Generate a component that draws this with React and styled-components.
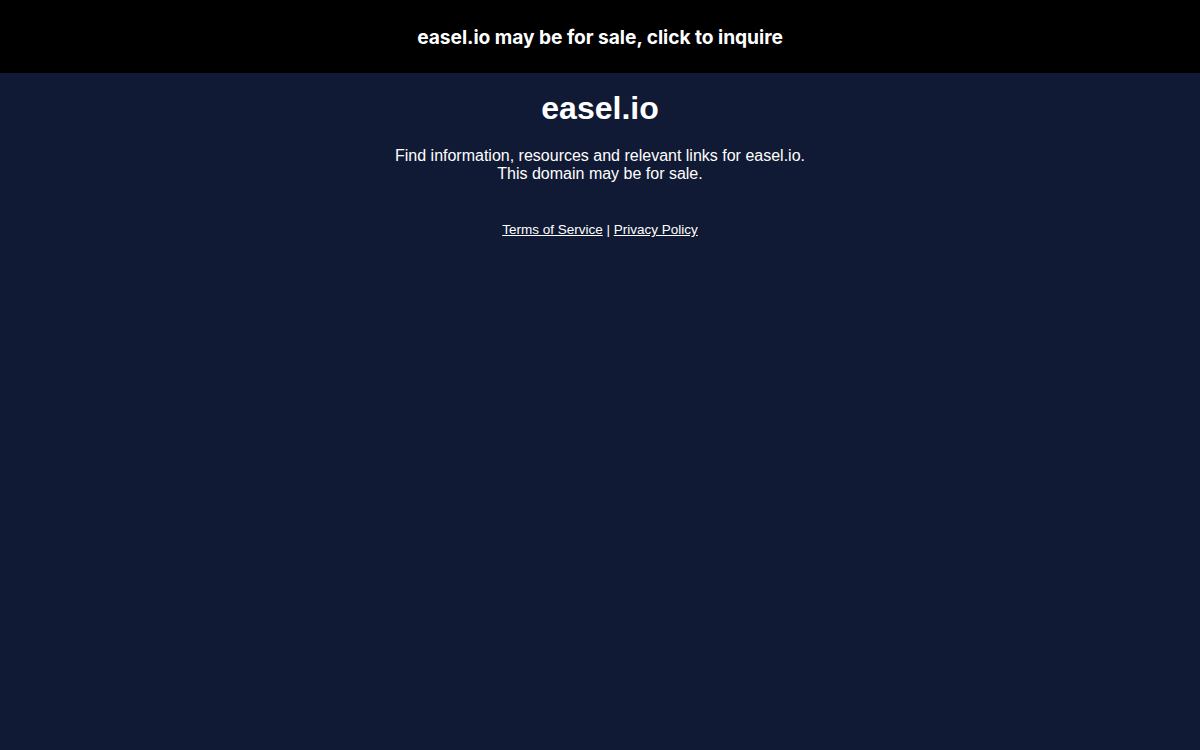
import styled, { createGlobalStyle } from 'styled-components';

const Global = createGlobalStyle`
    html, body {
        margin: 0;
        padding: 0;
        background: #111a35;
    }
    body {
        font-family: "Liberation Sans", Arial, Helvetica, sans-serif;
        color: #ffffff;
    }
`

const Page = styled.div`
    min-height: 750px;
    background: #111a35;
    display: flex;
    flex-direction: column;
`
const Banner = styled.a`
    display: flex;
    align-items: center;
    justify-content: center;
    height: 73px;
    background: #000000;
    color: #ffffff;
    text-decoration: none;
    font-family: Inter, "Noto Sans", sans-serif;
    font-weight: 700;
    font-size: 19.2px;
    letter-spacing: -0.05px;
`
const Main = styled.div`
    display: flex;
    flex-direction: column;
    align-items: center;
    text-align: center;
    padding-top: 15px;
`
const Title = styled.h1`
    margin: 0;
    font-size: 32px;
    line-height: 40px;
    font-weight: 700;
`
const Blurb = styled.p`
    margin: 19px 0 0;
    font-size: 16px;
    line-height: 18px;
`
const Legal = styled.div`
    margin-top: 39px;
    font-size: 13.5px;
    line-height: 16px;
`
const LegalLink = styled.a`
    color: #ffffff;
    text-decoration: underline;
`

export default function App() {
    return (
        <Page>
            <Global />
            <Banner href="#">easel.io may be for sale, click to inquire</Banner>
            <Main>
                <Title>easel.io</Title>
                <Blurb>
                    Find information, resources and relevant links for easel.io.<br />
                    This domain may be for sale.
                </Blurb>
                <Legal>
                    <LegalLink href="#">Terms of Service</LegalLink> | <LegalLink href="#">Privacy Policy</LegalLink>
                </Legal>
            </Main>
        </Page>
    )
}
